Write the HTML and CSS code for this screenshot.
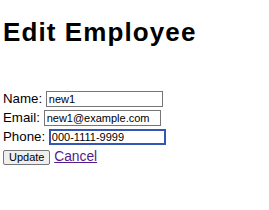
FILE: index.html
```html
<!DOCTYPE html>
<html lang="en">
<head>
    <meta charset="UTF-8">
    <meta name="viewport" content="width=device-width, initial-scale=1.0">
    <title>Edit Employee</title>
    <link rel="stylesheet" href="styles.css">
</head>
<body>
    <h1>Edit Employee</h1>

    <form class="edit-form">
        <div class="row">Name: <input type="text" class="field" value="new1"></div>
        <div class="row">Email: <input type="text" class="field" value="new1@example.com"></div>
        <div class="row">Phone: <input type="text" class="field focused" value="000-1111-9999"></div>
        <div class="row actions">
            <button type="button" class="btn">Update</button>
            <a href="#" class="cancel">Cancel</a>
        </div>
    </form>
</body>
</html>
```

FILE: styles.css
```css
body {
    font-family: "Liberation Sans", Arial, sans-serif;
    font-size: 13.3px;
    color: #000;
    background: #fff;
    margin: 0 3px;
}
h1 {
    font-size: 26px;
    letter-spacing: 1.1px;
    font-weight: bold;
    line-height: 30px;
    margin: 17px 0 42px;
}
.row {
    line-height: 19px;
    height: 19px;
}
.field {
    font-family: "Liberation Sans", Arial, sans-serif;
    font-size: 11px;
    width: 117px;
    height: 16px;
    box-sizing: border-box;
    padding: 0 2px;
    border: 1px solid #767676;
    margin: 0;
    color: #000;
}
.field.focused {
    border: 2px solid #3556b4;
    padding: 0 1px;
}
.actions {
    margin-top: 1px;
}
.btn {
    font-family: "Liberation Sans", Arial, sans-serif;
    font-size: 11px;
    height: 15px;
    padding: 0 5px;
    border: 1px solid #767676;
    border-radius: 2px;
    background-color: #efefef;
    color: #000;
    margin: 0;
}
.cancel {
    color: #551a8b;
    font-size: 13.8px;
}
```
